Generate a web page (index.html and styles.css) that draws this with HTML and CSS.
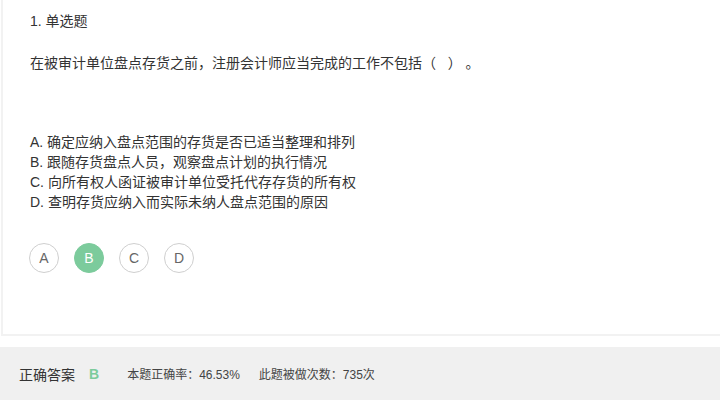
FILE: index.html
```html
<!DOCTYPE html>
<html lang="zh">
<head>
<meta charset="utf-8">
<link rel="stylesheet" href="styles.css">
</head>
<body>
<div class="card">
  <div class="qtype">1. 单选题</div>
  <div class="stem">在被审计单位盘点存货之前，注册会计师应当完成的工作不包括（&nbsp;&nbsp;&nbsp;）&nbsp;。</div>
  <ul class="options">
    <li>A. 确定应纳入盘点范围的存货是否已适当整理和排列</li>
    <li>B. 跟随存货盘点人员，观察盘点计划的执行情况</li>
    <li>C. 向所有权人函证被审计单位受托代存存货的所有权</li>
    <li>D. 查明存货应纳入而实际未纳人盘点范围的原因</li>
  </ul>
  <div class="choices">
    <span class="choice">A</span>
    <span class="choice active">B</span>
    <span class="choice">C</span>
    <span class="choice">D</span>
  </div>
</div>
<div class="footer">
  <span class="label">正确答案</span>
  <span class="answer">B</span>
  <span class="stat">本题正确率：46.53%</span>
  <span class="stat">此题被做次数：735次</span>
</div>
</body>
</html>
```
FILE: styles.css
```css
html, body {
  margin: 0;
  padding: 0;
  background: #fff;
  font-family: "Liberation Sans", "Noto Sans CJK SC", sans-serif;
  color: #333;
}
.card {
  box-sizing: border-box;
  height: 336px;
  margin-left: 1px;
  border-left: 2px solid #f2f2f2;
  border-bottom: 2px solid #f2f2f2;
  padding: 11px 0 0 27px;
}
.qtype {
  font-size: 14px;
  line-height: 20px;
}
.stem {
  margin-top: 22px;
  font-size: 14px;
  line-height: 20px;
}
.options {
  list-style: none;
  margin: 59px 0 0 0;
  padding: 0;
  font-size: 14px;
  line-height: 20px;
}
.choices {
  display: flex;
  gap: 15px;
  margin-top: 31px;
  margin-left: -1px;
}
.choice {
  box-sizing: border-box;
  width: 30px;
  height: 30px;
  border: 1px solid #cfcfcf;
  border-radius: 50%;
  display: flex;
  align-items: center;
  justify-content: center;
  font-size: 14px;
  color: #666;
}
.choice.active {
  background: #7ccb9c;
  border-color: #7ccb9c;
  color: #fff;
}
.footer {
  margin-top: 11px;
  height: 53px;
  background: #f0f0f0;
  display: flex;
  align-items: center;
  padding-left: 19px;
}
.label {
  font-size: 14px;
  color: #333;
}
.answer {
  margin-left: 14px;
  font-size: 14px;
  font-weight: bold;
  color: #7ccb9c;
}
.stat {
  font-size: 12px;
  color: #444;
  margin-left: 19px;
}
.answer + .stat {
  margin-left: 28px;
}
```
